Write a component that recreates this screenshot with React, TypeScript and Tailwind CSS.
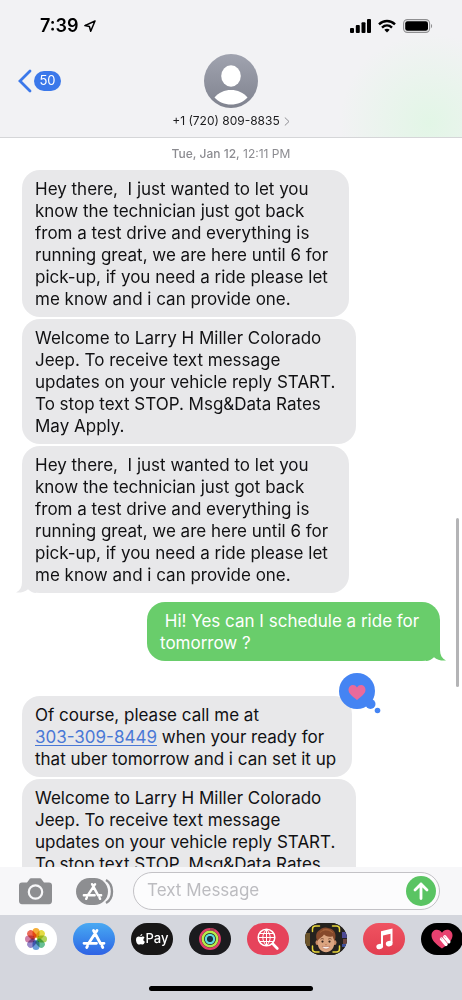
import type { ReactNode } from "react";

type Message = {
  id: number;
  from: "them" | "me";
  lines: ReactNode[];
  tail?: boolean;
  liked?: boolean;
  spacing: string;
};

const technician = [
  "Hey there,  I just wanted to let you ",
  "know the technician just got back ",
  "from a test drive and everything is ",
  "running great, we are here until 6 for ",
  "pick-up, if you need a ride please let ",
  "me know and i can provide one.",
];

const welcome = [
  "Welcome to Larry H Miller Colorado ",
  "Jeep. To receive text message ",
  "updates on your vehicle reply START. ",
  "To stop text STOP. Msg&Data Rates ",
  "May Apply.",
];

const messages: Message[] = [
  { id: 1, from: "them", lines: technician, spacing: "mt-2" },
  { id: 2, from: "them", lines: welcome, spacing: "mt-0.5" },
  { id: 3, from: "them", lines: technician, tail: true, spacing: "mt-0.5" },
  {
    id: 4,
    from: "me",
    lines: [" Hi! Yes can I schedule a ride for ", "tomorrow ?"],
    tail: true,
    spacing: "mt-[9px]",
  },
  {
    id: 5,
    from: "them",
    lines: [
      "Of course, please call me at ",
      <>
        <a href="tel:3033098449" className="text-[#4a78d6] underline underline-offset-2">
          303-309-8449
        </a>{" "}
        when your ready for
      </>,
      "that uber tomorrow and i can set it up",
    ],
    liked: true,
    spacing: "mt-[35px]",
  },
  { id: 6, from: "them", lines: welcome, spacing: "mt-0.5" },
];

const Tail = ({ className }: { className: string }) => (
  <svg className={`absolute bottom-0 h-5 w-5 ${className}`} viewBox="0 0 20 20" fill="currentColor">
    <path d="M6 0v9c0 5-2 8.500-6 10.500c5 .5 9-.9 12-3.300c2.500 2.300 5 3.600 8 3.800V0z" />
  </svg>
);

const HeartReaction = () => (
  <svg className="absolute -top-6 -right-[29px] h-[42px] w-[42px]" viewBox="0 0 42 42">
    <g fill="#4484f3">
      <circle cx="18" cy="19" r="18" />
      <circle cx="31.500" cy="32" r="5" />
      <circle cx="38.500" cy="38.500" r="2.800" />
    </g>
    <path
      d="M18 28c-5-4-8.500-6.500-8.500-10.300c0-5.200 6.300-6.300 8.500-2.200c2.200-4.100 8.500-3 8.500 2.200c0 3.800-3.500 6.300-8.500 10.300z"
      fill="#ea6a9b"
    />
  </svg>
);

const Bubble = ({ message }: { message: Message }) => {
  const mine = message.from === "me";
  return (
    <li
      className={`relative w-fit whitespace-pre rounded-[18px] pt-2 pr-4 pb-[7px] pl-[13px] text-[17px] leading-[22px] ${message.spacing} ${
        mine ? "self-end bg-[#69cd6b] text-white" : "self-start bg-[#e8e8ea] text-[#111113]"
      }`}
    >
      {message.lines.map((line, i) => (
        <p key={i}>{line}</p>
      ))}
      {message.tail && (
        <Tail className={mine ? "-right-1.5 -scale-x-100 text-[#69cd6b]" : "-left-1.5 text-[#e8e8ea]"} />
      )}
      {message.liked && <HeartReaction />}
    </li>
  );
};

const StatusBar = () => (
  <div className="flex h-[52px] items-center justify-between pr-[29px] pl-10">
    <div className="flex items-center gap-1.5 text-lg font-semibold text-black">
      <span>7:39</span>
      <svg className="h-3 w-3" viewBox="0 0 12 12" fill="none" stroke="#000" strokeWidth="1.500" strokeLinejoin="round">
        <path d="M11 1L.9 5.600l4.500.9l1.300 4.700z" />
      </svg>
    </div>
    <div className="flex items-center gap-[7px]">
      <svg className="h-[14px] w-[21px]" viewBox="0 0 21 14">
        <rect x="0" y="9" width="4" height="5" rx="1" />
        <rect x="5.800" y="6" width="4" height="8" rx="1" />
        <rect x="11.500" y="3.200" width="4" height="10.800" rx="1" />
        <rect x="17" y="0" width="4" height="14" rx="1" />
      </svg>
      <svg className="h-[14px] w-[18px]" viewBox="0 0 18 14" fill="none" stroke="#000" strokeWidth="2.400">
        <path d="M1 5.300c4.600-4.500 11.400-4.500 16 0" />
        <path d="M4 8.600c3-2.800 7-2.800 10 0" />
        <path d="M9 13.500L6.300 10.800c1.500-1.400 3.900-1.400 5.400 0z" fill="#000" stroke="none" />
      </svg>
      <svg className="h-[14px] w-[30px]" viewBox="0 0 30 14">
        <rect x=".6" y=".6" width="26" height="12.800" rx="3.800" fill="none" stroke="#8f8f91" strokeWidth="1.100" />
        <rect x="2.200" y="2.200" width="22.800" height="9.600" rx="2.300" />
        <path d="M28 5v4.200c1.500-.6 1.500-3.600 0-4.200z" fill="#8f8f91" />
      </svg>
    </div>
  </div>
);

const Header = () => (
  <header className="shrink-0 border-b border-[#d5d6d8] bg-[#f2f2f4] bg-[radial-gradient(circle_at_93%_90%,#e2f6e6_0,#e2f6e600_90px)]">
    <StatusBar />
    <div className="grid h-[85px] grid-cols-3 items-start px-[18px]">
      <button type="button" aria-label="Back" className="mt-[17px] flex items-center gap-0.5">
        <svg className="h-6 w-[14px]" viewBox="0 0 14 24" fill="none" stroke="#3b78ea" strokeWidth="2.800" strokeLinecap="round">
          <path d="M12 2L2 12l10 10" />
        </svg>
        <span className="flex h-5 w-[27px] items-center justify-center rounded-full bg-[#3b78ea] text-[13px] text-white">
          50
        </span>
      </button>
      <button type="button" className="mt-0.5 flex flex-col items-center gap-1 justify-self-center">
        <svg className="h-[54px] w-[54px]" viewBox="0 0 54 54">
          <defs>
            <linearGradient id="avatar" x1="0" y1="0" x2="0" y2="1">
              <stop offset="0" stopColor="#a0a3af" />
              <stop offset="1" stopColor="#80838f" />
            </linearGradient>
          </defs>
          <circle cx="27" cy="27" r="27" fill="url(#avatar)" />
          <ellipse cx="27" cy="22" rx="9.800" ry="10.700" fill="#fff" />
          <path d="M10.500 43.500c4-5 10-7.500 16.500-7.500s12.500 2.500 16.500 7.500c-4 4.500-10 7-16.500 7s-12.500-2.500-16.500-7z" fill="#fff" />
        </svg>
        <span className="flex items-center gap-1 text-xs leading-[18px] whitespace-nowrap text-[#1b1b1d]">
          +1 (720) 809-8835
          <svg className="h-[9px] w-1.5" viewBox="0 0 6 9" fill="none" stroke="#8e8e93">
            <path d="M.8.500L5 4.500L.8 8.500" />
          </svg>
        </span>
      </button>
    </div>
  </header>
);

const storeStrokes = "M11.500 2.500l7 13M15 2.500l-8.500 13M2 15.300h12.500M19.500 15.300h2.500M5.500 18l-.8 1.500M20 18l.8 1.500";

const StoreMark = ({ className }: { className: string }) => (
  <svg className={className} viewBox="0 0 24 22" fill="none" stroke="#fff" strokeWidth="2.800" strokeLinecap="round">
    <path d={storeStrokes} />
  </svg>
);

const Composer = () => (
  <div className="flex h-12 shrink-0 items-center bg-[#f7f7f9] pr-[22px] pl-[18px]">
    <button type="button" aria-label="Camera">
      <svg className="h-[27px] w-[35px]" viewBox="0 0 35 27">
        <path
          d="M4 4.500h5l2.300-3C12 .5 12.500.3 13.500.3h8c1 0 1.500.2 2.200 1.200l2.300 3h5c2 0 3 1.200 3 3V23c0 2-1 3.200-3 3.200H4c-2 0-3-1.200-3-3.200V7.500c0-1.800 1-3 3-3z"
          fill="#8d8e91"
        />
        <circle cx="17.500" cy="14" r="6.700" fill="none" stroke="#f7f7f9" strokeWidth="2.200" />
      </svg>
    </button>
    <button type="button" aria-label="Apps" className="relative ml-[23px] flex h-[27px] w-[38px]">
      <span className="flex h-[27px] w-8 items-center justify-center rounded-full bg-[#8d8e91]">
        <StoreMark className="h-[19px] w-[21px]" />
      </span>
      <svg className="absolute right-0 top-0 h-[27px] w-[14px]" viewBox="0 0 14 27" fill="none" stroke="#8d8e91" strokeWidth="2.400">
        <path d="M6 2c8 4.500 8 18.500 0 23" />
      </svg>
    </button>
    <div className="ml-[19px] flex h-[38px] min-w-0 flex-1 items-center rounded-full border border-[#c3c2c6] bg-[#fcfcfd] pr-[3px] pl-[13px]">
      <input
        type="text"
        aria-label="Text Message"
        placeholder="Text Message"
        className="min-w-0 flex-1 bg-transparent text-[17px] outline-none placeholder:text-[#bcbcc0]"
      />
      <button type="button" aria-label="Send" className="flex h-[30px] w-[30px] items-center justify-center rounded-full bg-[#5ac463]">
        <svg className="h-[18px] w-4" viewBox="0 0 16 18" fill="none" stroke="#fff" strokeWidth="2.800" strokeLinecap="round" strokeLinejoin="round">
          <path d="M8 16.500V2M2 8l6-6l6 6" />
        </svg>
      </button>
    </div>
  </div>
);

const petals = [
  { angle: 0, color: "#f5a623" },
  { angle: 45, color: "#e3d72f" },
  { angle: 90, color: "#a6cd4b" },
  { angle: 135, color: "#59b98a" },
  { angle: 180, color: "#5b95d6" },
  { angle: 225, color: "#8c7cc4" },
  { angle: 270, color: "#c9719f" },
  { angle: 315, color: "#ea5a45" },
];

const PhotosIcon = () => (
  <svg className="h-[22px] w-[22px]" viewBox="0 0 22 22">
    {petals.map(({ angle, color }) => (
      <rect
        key={angle}
        x="7.500"
        y="0"
        width="7"
        height="9.800"
        rx="3.500"
        fill={color}
        className="mix-blend-multiply"
        opacity=".9"
        transform={`rotate(${angle} 11 11)`}
      />
    ))}
  </svg>
);

const PayIcon = () => (
  <span className="flex items-center gap-px text-[13px] font-medium text-white">
    <svg className="h-[11px] w-[9px]" viewBox="0 0 9 11" fill="#fff">
      <path d="M6.300 0c.1 1.200-.9 2.300-2 2.300C4.200 1.200 5.200.1 6.300 0zM8.500 3.700c-1.700 1-1.500 3.400.4 4.100c-.5 1.400-1.300 2.800-2.200 2.800c-.8 0-1-.4-1.900-.4c-.9 0-1.200.4-1.900.4C1.500 10.600 0 8 0 5.900c0-2.200 1.300-3.300 2.700-3.300c.9 0 1.500.5 2.100.5c.6 0 1.200-.6 2.300-.6c.6 0 1.100.4 1.400 1.200z" />
    </svg>
    Pay
  </span>
);

const ActivityIcon = () => (
  <svg className="h-[22px] w-[22px]" viewBox="0 0 22 22" fill="none">
    <circle cx="11" cy="11" r="9.800" stroke="#e23e6b" strokeWidth="2.300" />
    <circle cx="11" cy="11" r="7.200" stroke="#b6ec4a" strokeWidth="2.500" />
    <circle cx="11" cy="11" r="4.100" stroke="#5fdde0" strokeWidth="2.300" />
    <circle cx="11" cy="11" r="2.400" fill="#12324a" />
    <path d="M11 1.200a9.800 9.800 0 0 1 4.500 1.200" stroke="#a03a50" strokeWidth="2.300" />
  </svg>
);

const SearchIcon = () => (
  <svg className="h-[22px] w-[22px]" viewBox="0 0 22 22" fill="none" stroke="#fff" strokeLinecap="round">
    <circle cx="9.500" cy="9.500" r="8.300" strokeWidth="1.500" />
    <path d="M9.500 2v15M2 9.500h15M3.300 5.500h12.400M3.300 13.500h12.400M9.500 1.500c-5 4.500-5 11.500 0 16M9.500 1.500c5 4.500 5 11.500 0 16" strokeWidth="1" />
    <path d="M16 16l4.300 4.500" strokeWidth="2.600" />
  </svg>
);

const MemojiIcon = () => (
  <svg className="h-8 w-[42px]" viewBox="0 0 42 32">
    <rect width="42" height="32" fill="#25221f" />
    <path d="M0 10h5v13H0z" fill="#6b542b" />
    <path d="M37 9h5v6h-5z" fill="#4d4a96" />
    <path d="M38 16h4v5h-4z" fill="#6d453f" />
    <path d="M37 21h5v3h-5z" fill="#3c4f9c" />
    <ellipse cx="12.300" cy="19.500" rx="1.800" ry="2.600" fill="#c98a66" />
    <ellipse cx="29.700" cy="19.500" rx="1.800" ry="2.600" fill="#c98a66" />
    <path d="M12.800 15c0-8 16.400-8 16.400 0v5.500c0 5-4 8.700-8.200 8.700s-8.200-3.700-8.200-8.700z" fill="#dba581" />
    <path d="M12.300 18c-2.300-5-1-9.500 2.500-11c1.500-2.500 6-3.300 9-1.800c4 .3 6.700 3.800 6.700 7.300c0 2-.3 4-.9 5.500c-.9-1.500-1.300-3.300-2-4.800c-4 1.300-7-.2-8.600-1.700c-1.500 2.500-4.500 3.500-6.700 6.500z" fill="#86492b" />
    <path d="M15 9.500c3-3 7.500-3.500 12-.5M18 7c4-1.500 7-.5 10 3" stroke="#ad6a40" strokeWidth=".8" fill="none" />
    <path d="M15.500 16.200c1-.8 2.500-.8 3.300 0M23.200 16.200c1-.8 2.500-.8 3.300 0" stroke="#6b3c26" strokeWidth=".8" fill="none" />
    <circle cx="17.500" cy="18.600" r="1.100" fill="#35221c" />
    <circle cx="24.500" cy="18.600" r="1.100" fill="#35221c" />
    <path d="M19.900 21.300c.6.600 1.600.6 2.200 0" stroke="#b87352" strokeWidth=".9" fill="none" />
    <path d="M17.300 23.200c2.500.7 5 .7 7.400 0c-.6 3.600-6.800 3.600-7.400 0z" fill="#fff" stroke="#a85a48" strokeWidth=".5" />
    <path
      d="M7.500 8.500V6c0-2 1-3 3-3h4M27.500 3h4c2 0 3 1 3 3v2.500M34.500 23v3c0 2-1 3-3 3h-3.500M14 29h-3.500c-2 0-3-1-3-3v-3"
      fill="none"
      stroke="#e7d63c"
      strokeWidth="1.500"
      strokeLinecap="round"
    />
  </svg>
);

const MusicIcon = () => (
  <svg className="h-[22px] w-[19px]" viewBox="0 0 19 22" fill="#fff">
    <path d="M6 3.200L17.500.6V15h-2V5.800L8 7.500V18H6z" />
    <ellipse cx="4.700" cy="18.500" rx="3.400" ry="2.700" transform="rotate(-15 4.700 18.500)" />
    <ellipse cx="14.200" cy="15.700" rx="3.400" ry="2.700" transform="rotate(-15 14.200 15.700)" />
  </svg>
);

const DigitalTouchIcon = () => (
  <svg className="h-5 w-[22px]" viewBox="0 0 22 20">
    <path d="M11 19.500C4 14.500.5 10.800.5 6.200c0-6 7.700-7.500 10.500-2.500c2.800-5 10.500-3.500 10.500 2.500c0 4.600-3.500 8.300-10.500 13.300z" fill="#e8416f" />
    <g stroke="#fff" strokeWidth="3.400" strokeLinecap="round" fill="none">
      <path d="M10.500 10l4.500 5.500M13.800 7.800l4 5" />
    </g>
    <path d="M9.800 9l1.300 1.500M13.500 7.300l1.300 1.500" stroke="#e79ab2" strokeWidth="1" />
  </svg>
);

const apps = [
  { name: "Photos", className: "bg-white", icon: <PhotosIcon /> },
  {
    name: "App Store",
    className: "bg-linear-to-b from-[#4aa9f2] to-[#2f62e4]",
    icon: <StoreMark className="h-[22px] w-6" />,
  },
  { name: "Apple Pay", className: "bg-[#171616]", icon: <PayIcon /> },
  { name: "Activity", className: "bg-[#1b1b1e]", icon: <ActivityIcon /> },
  { name: "Images", className: "bg-[#e6435b]", icon: <SearchIcon /> },
  { name: "Memoji", className: "bg-[#25221f]", icon: <MemojiIcon /> },
  { name: "Music", className: "bg-linear-to-b from-[#ef5361] to-[#e23e50]", icon: <MusicIcon /> },
  { name: "Digital Touch", className: "bg-black", icon: <DigitalTouchIcon /> },
];

const AppDock = () => (
  <footer className="flex h-[85px] shrink-0 flex-col justify-between bg-[#d4d6dd] pt-2 pb-[9px]">
    <nav className="flex gap-4 overflow-hidden pl-[15px]">
      {apps.map((app) => (
        <button
          key={app.name}
          type="button"
          aria-label={app.name}
          className={`flex h-8 w-[42px] shrink-0 items-center justify-center overflow-hidden rounded-full ${app.className}`}
        >
          {app.icon}
        </button>
      ))}
    </nav>
    <div className="h-[5px] w-[164px] self-center rounded-full bg-black" />
  </footer>
);

const App = () => {
  return (
    <div className="flex h-screen flex-col bg-white font-['Inter',sans-serif]">
      <Header />
      <main className="relative min-h-0 flex-1 overflow-hidden px-[22px]">
        <p className="mt-2 text-center text-xs leading-4 text-[#8b8b90]">
          <span className="font-medium">Tue, Jan 12,</span> 12:11 PM
        </p>
        <ul className="flex flex-col">
          {messages.map((message) => (
            <Bubble key={message.id} message={message} />
          ))}
        </ul>
        <div className="absolute top-[380px] right-[3px] h-[169px] w-[3px] rounded-full bg-[#b4b4b6]" />
      </main>
      <Composer />
      <AppDock />
    </div>
  );
};

export default App;
